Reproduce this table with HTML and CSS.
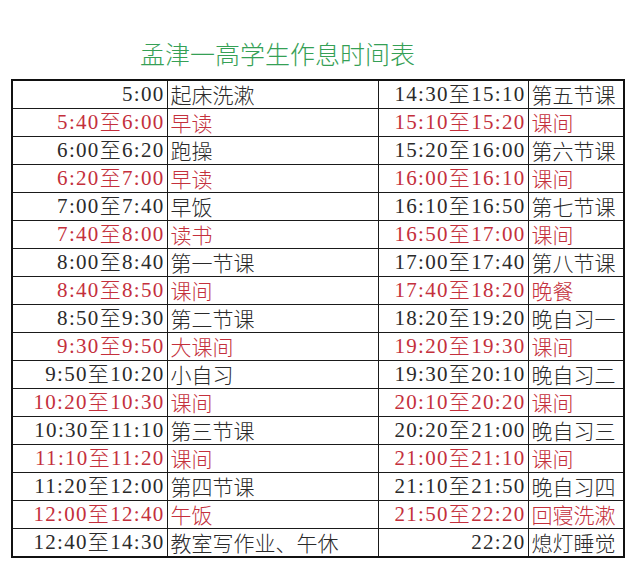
FILE: index.html
```html
<!DOCTYPE html>
<html lang="zh-CN">
<head>
<meta charset="utf-8">
<title>孟津一高学生作息时间表</title>
<link rel="stylesheet" href="styles.css">
</head>
<body>
<div class="page">
  <h1 class="title">孟津一高学生作息时间表</h1>
  <table class="schedule">
    <colgroup>
      <col class="c1"><col class="c2"><col class="c3"><col class="c4">
    </colgroup>
    <tbody>
      <tr><td class="time">5:00</td><td class="act">起床洗漱</td><td class="time">14:30<span class="to">至</span>15:10</td><td class="act">第五节课</td></tr>
      <tr class="red"><td class="time">5:40<span class="to">至</span>6:00</td><td class="act">早读</td><td class="time">15:10<span class="to">至</span>15:20</td><td class="act">课间</td></tr>
      <tr><td class="time">6:00<span class="to">至</span>6:20</td><td class="act">跑操</td><td class="time">15:20<span class="to">至</span>16:00</td><td class="act">第六节课</td></tr>
      <tr class="red"><td class="time">6:20<span class="to">至</span>7:00</td><td class="act">早读</td><td class="time">16:00<span class="to">至</span>16:10</td><td class="act">课间</td></tr>
      <tr><td class="time">7:00<span class="to">至</span>7:40</td><td class="act">早饭</td><td class="time">16:10<span class="to">至</span>16:50</td><td class="act">第七节课</td></tr>
      <tr class="red"><td class="time">7:40<span class="to">至</span>8:00</td><td class="act">读书</td><td class="time">16:50<span class="to">至</span>17:00</td><td class="act">课间</td></tr>
      <tr><td class="time">8:00<span class="to">至</span>8:40</td><td class="act">第一节课</td><td class="time">17:00<span class="to">至</span>17:40</td><td class="act">第八节课</td></tr>
      <tr class="red"><td class="time">8:40<span class="to">至</span>8:50</td><td class="act">课间</td><td class="time">17:40<span class="to">至</span>18:20</td><td class="act">晚餐</td></tr>
      <tr><td class="time">8:50<span class="to">至</span>9:30</td><td class="act">第二节课</td><td class="time">18:20<span class="to">至</span>19:20</td><td class="act">晚自习一</td></tr>
      <tr class="red"><td class="time">9:30<span class="to">至</span>9:50</td><td class="act">大课间</td><td class="time">19:20<span class="to">至</span>19:30</td><td class="act">课间</td></tr>
      <tr><td class="time">9:50<span class="to">至</span>10:20</td><td class="act">小自习</td><td class="time">19:30<span class="to">至</span>20:10</td><td class="act">晚自习二</td></tr>
      <tr class="red"><td class="time">10:20<span class="to">至</span>10:30</td><td class="act">课间</td><td class="time">20:10<span class="to">至</span>20:20</td><td class="act">课间</td></tr>
      <tr><td class="time">10:30<span class="to">至</span>11:10</td><td class="act">第三节课</td><td class="time">20:20<span class="to">至</span>21:00</td><td class="act">晚自习三</td></tr>
      <tr class="red"><td class="time">11:10<span class="to">至</span>11:20</td><td class="act">课间</td><td class="time">21:00<span class="to">至</span>21:10</td><td class="act">课间</td></tr>
      <tr><td class="time">11:20<span class="to">至</span>12:00</td><td class="act">第四节课</td><td class="time">21:10<span class="to">至</span>21:50</td><td class="act">晚自习四</td></tr>
      <tr class="red"><td class="time">12:00<span class="to">至</span>12:40</td><td class="act">午饭</td><td class="time">21:50<span class="to">至</span>22:20</td><td class="act">回寝洗漱</td></tr>
      <tr><td class="time">12:40<span class="to">至</span>14:30</td><td class="act">教室写作业、午休</td><td class="time">22:20</td><td class="act">熄灯睡觉</td></tr>
    </tbody>
  </table>
</div>
</body>
</html>
```

FILE: styles.css
```css
html, body {
  margin: 0;
  padding: 0;
  background: #ffffff;
}

.page {
  padding-top: 38px;
}

.title {
  margin: 0 0 11px 140px;
  height: 30px;
  line-height: 30px;
  font-family: "Noto Sans CJK SC", sans-serif;
  font-weight: 300;
  font-size: 25px;
  color: #35a055;
  white-space: nowrap;
}

.schedule {
  margin-left: 11px;
  width: 612px;
  table-layout: fixed;
  border-collapse: collapse;
  border: 2px solid #111;
  color: #2a2a2a;
}

.c1 { width: 155px; }
.c2 { width: 211px; }
.c3 { width: 150px; }
.c4 { width: 96px; }

.schedule td {
  height: 27px;
  padding: 0;
  border: 1.5px solid #1a1a1a;
  line-height: 27px;
  white-space: nowrap;
}

.time {
  text-align: right;
  padding-right: 2px !important;
  font-family: "Liberation Serif", serif;
  font-size: 21px;
  letter-spacing: 1.3px;
}

.to {
  font-family: "Noto Sans CJK SC", sans-serif;
  font-weight: 300;
  line-height: 22px;
}

.act {
  text-align: left;
  padding-left: 3px !important;
  font-family: "Noto Sans CJK SC", sans-serif;
  font-weight: 300;
  font-size: 21px;
}

.red td {
  color: #c4303c;
}
```
